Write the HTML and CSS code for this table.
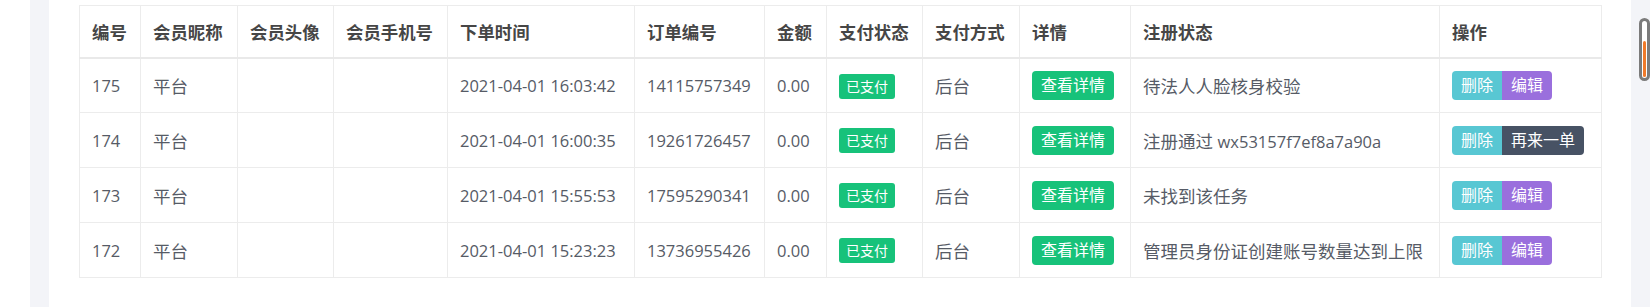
FILE: index.html
```html
<!DOCTYPE html>
<html lang="zh-CN">
<head>
<meta charset="utf-8">
<title>订单列表</title>
<link rel="stylesheet" href="styles.css">
</head>
<body>
<div class="page">
  <div class="edge"></div>
  <div class="strip"></div>
  <main class="main">
    <table class="grid">
      <colgroup>
        <col class="c-id"><col class="c-nick"><col class="c-avatar"><col class="c-phone"><col class="c-time"><col class="c-order"><col class="c-amount"><col class="c-pay"><col class="c-method"><col class="c-detail"><col class="c-reg"><col class="c-op">
      </colgroup>
      <thead>
        <tr>
          <th>编号</th><th>会员昵称</th><th>会员头像</th><th>会员手机号</th><th>下单时间</th><th>订单编号</th><th>金额</th><th>支付状态</th><th>支付方式</th><th>详情</th><th>注册状态</th><th>操作</th>
        </tr>
      </thead>
      <tbody>
        <tr>
          <td class="num">175</td><td>平台</td><td></td><td></td><td class="num">2021-04-01 16:03:42</td><td class="num">14115757349</td><td class="num">0.00</td>
          <td><span class="badge">已支付</span></td><td>后台</td>
          <td><span class="btn btn-green">查看详情</span></td>
          <td>待法人人脸核身校验</td>
          <td><div class="btn-group"><span class="btn btn-cyan">删除</span><span class="btn btn-purple">编辑</span></div></td>
        </tr>
        <tr>
          <td class="num">174</td><td>平台</td><td></td><td></td><td class="num">2021-04-01 16:00:35</td><td class="num">19261726457</td><td class="num">0.00</td>
          <td><span class="badge">已支付</span></td><td>后台</td>
          <td><span class="btn btn-green">查看详情</span></td>
          <td>注册通过 <span class="latin">wx53157f7ef8a7a90a</span></td>
          <td><div class="btn-group"><span class="btn btn-cyan">删除</span><span class="btn btn-dark">再来一单</span></div></td>
        </tr>
        <tr>
          <td class="num">173</td><td>平台</td><td></td><td></td><td class="num">2021-04-01 15:55:53</td><td class="num">17595290341</td><td class="num">0.00</td>
          <td><span class="badge">已支付</span></td><td>后台</td>
          <td><span class="btn btn-green">查看详情</span></td>
          <td>未找到该任务</td>
          <td><div class="btn-group"><span class="btn btn-cyan">删除</span><span class="btn btn-purple">编辑</span></div></td>
        </tr>
        <tr>
          <td class="num">172</td><td>平台</td><td></td><td></td><td class="num">2021-04-01 15:23:23</td><td class="num">13736955426</td><td class="num">0.00</td>
          <td><span class="badge">已支付</span></td><td>后台</td>
          <td><span class="btn btn-green">查看详情</span></td>
          <td>管理员身份证创建账号数量达到上限</td>
          <td><div class="btn-group"><span class="btn btn-cyan">删除</span><span class="btn btn-purple">编辑</span></div></td>
        </tr>
      </tbody>
    </table>
  </main>
  <div class="rail">
    <div class="scroll"><div class="thumb"></div></div>
  </div>
</div>
</body>
</html>
```

FILE: styles.css
```css
* { box-sizing: border-box; }
html, body { margin: 0; padding: 0; background: #ffffff; }
body {
  font-family: "Open Sans", "Noto Sans CJK SC", sans-serif;
  color: #565b66;
}
.page {
  display: flex;
  height: 307px;
  overflow: hidden;
}
.edge { width: 30px; flex: none; background: #ffffff; }
.strip { width: 19px; flex: none; background: #f3f4f8; }
.main {
  flex: 1;
  background: #ffffff;
  padding: 5px 0 0 30px;
}
.rail {
  width: 19px;
  flex: none;
  background: #f3f4f8;
  padding: 18px 0 0 8px;
}
.scroll {
  width: 11px;
  height: 63px;
  border: 3px solid #7b7b7b;
  border-radius: 6px;
  background: #ffffff;
  display: flex;
  flex-direction: column;
  justify-content: flex-end;
  padding: 0 1px 1px;
}
.thumb {
  height: 36px;
  background: #f07a2a;
  border-radius: 2px;
}
.grid {
  border-collapse: collapse;
  table-layout: fixed;
  width: 1522px;
  border: 1px solid #ececec;
}
.c-id { width: 61px; }
.c-nick { width: 97px; }
.c-avatar { width: 96px; }
.c-phone { width: 114px; }
.c-time { width: 187px; }
.c-order { width: 130px; }
.c-amount { width: 62px; }
.c-pay { width: 96px; }
.c-method { width: 97px; }
.c-detail { width: 111px; }
.c-reg { width: 309px; }
.c-op { width: 162px; }
.grid th, .grid td {
  border: 1px solid #ececec;
  text-align: left;
  padding: 0 12px;
  white-space: nowrap;
}
.grid th {
  height: 52px;
  font-size: 17.4px;
  font-weight: 700;
  color: #464646;
  border-bottom: 2px solid #e9e9e9;
}
.grid td {
  height: 55px;
  font-size: 17.5px;
  color: #565b66;
}
.grid td.num, .latin { font-size: 16.5px; }
.badge {
  display: inline-block;
  height: 25px;
  line-height: 25px;
  padding: 0 7px;
  font-size: 14px;
  color: #ffffff;
  background: #17c27a;
  border-radius: 3px;
  vertical-align: middle;
}
.btn-group { display: flex; }
.btn {
  display: inline-block;
  height: 29px;
  line-height: 29px;
  padding: 0 9px;
  font-size: 16px;
  color: #ffffff;
  vertical-align: middle;
}
.btn-green { background: #17c27a; border-radius: 4px; }
.btn-cyan { background: #58c7d3; border-radius: 4px 0 0 4px; }
.btn-purple { background: #9a6fdd; border-radius: 0 4px 4px 0; }
.btn-dark { background: #475264; border-radius: 0 4px 4px 0; }
```
